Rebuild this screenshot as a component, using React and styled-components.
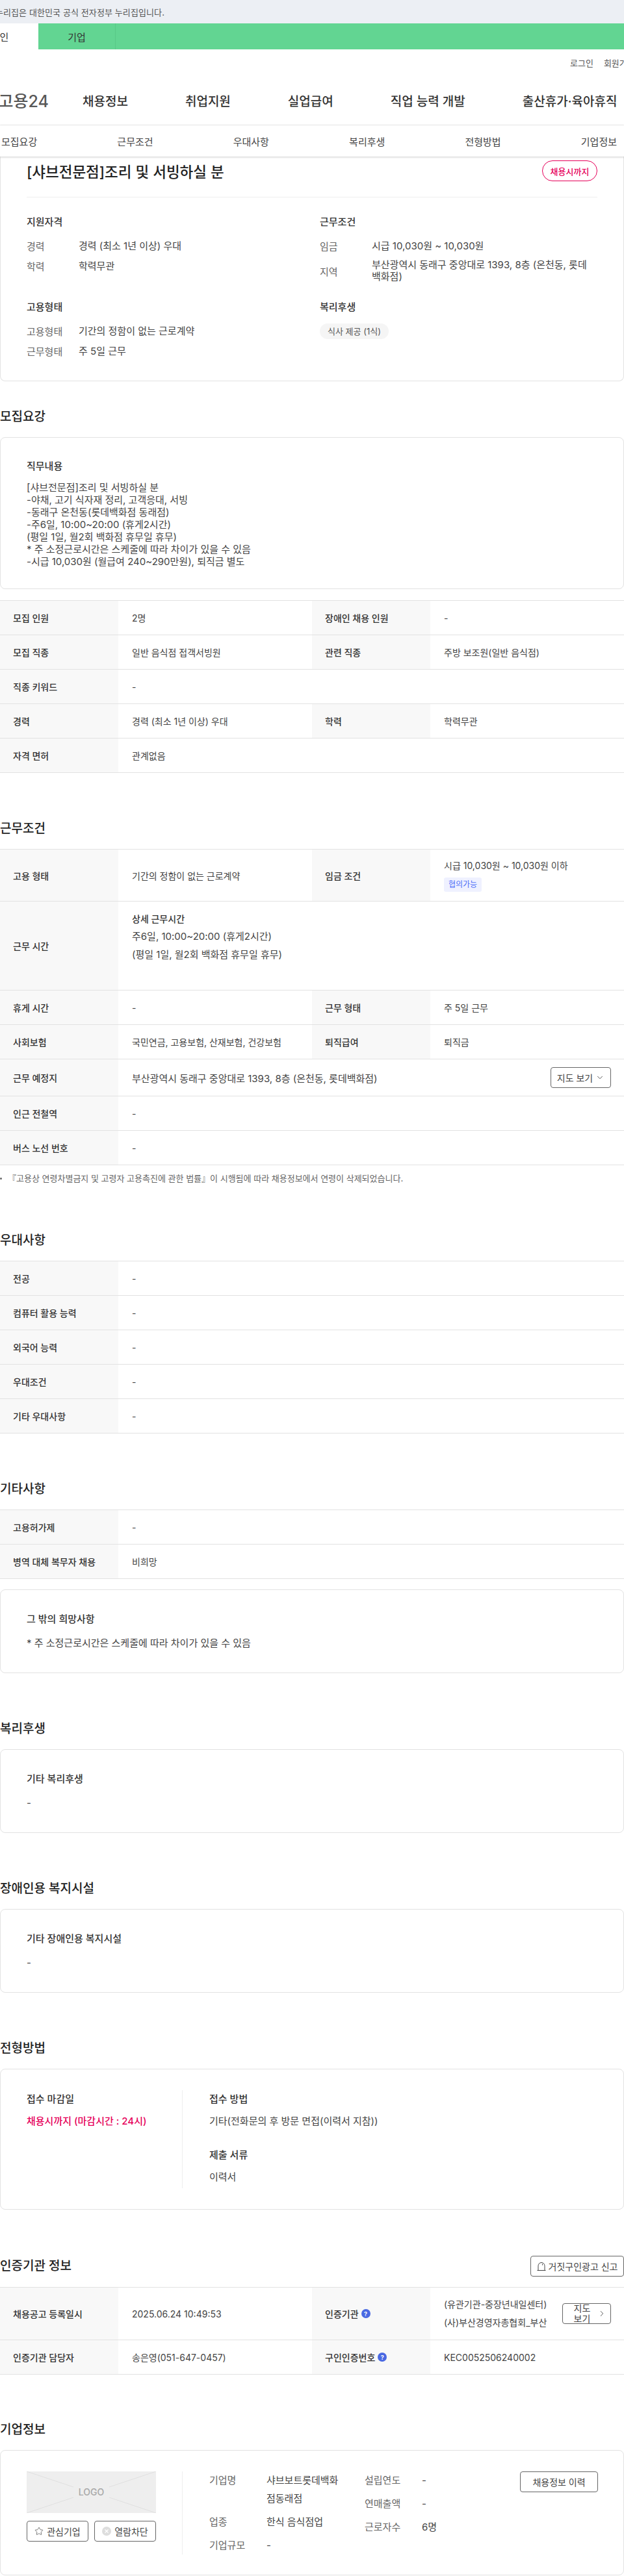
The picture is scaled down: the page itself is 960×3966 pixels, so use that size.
import React from "react";
import styled, {createGlobalStyle} from "styled-components";
import {ChevronDown, ChevronRight, Star} from "lucide-react";

const GlobalStyle = createGlobalStyle`
  * {
    box-sizing: border-box;
  }
  html,
  body {
    margin: 0;
    padding: 0;
    background: #fff;
  }
  body {
    font-family: Inter, "Noto Sans CJK KR", "Noto Sans", sans-serif;
    color: #333;
  }
`;

const recruitRows = [
  [["모집 인원", "2명"], ["장애인 채용 인원", "-"]],
  [["모집 직종", "일반 음식점 접객서빙원"], ["관련 직종", "주방 보조원(일반 음식점)"]],
  [["직종 키워드", "-"]],
  [["경력", "경력 (최소 1년 이상) 우대"], ["학력", "학력무관"]],
  [["자격 면허", "관계없음"]],
];

const preferRows = [
  ["전공", "-"],
  ["컴퓨터 활용 능력", "-"],
  ["외국어 능력", "-"],
  ["우대조건", "-"],
  ["기타 우대사항", "-"],
];

const App = () => {
  return (
    <Page>
      <GlobalStyle />
      <TopBar>
        <TopBarText>누리집은 대한민국 공식 전자정부 누리집입니다.</TopBarText>
      </TopBar>
      <TabBar>
        <Tab $active>개인</Tab>
        <Tab>기업</Tab>
      </TabBar>
      <UtilRow>
        <UtilLink>로그인</UtilLink>
        <UtilLink>회원가입</UtilLink>
      </UtilRow>
      <MainNav>
        <LogoBox>
          <Logo>고용24</Logo>
        </LogoBox>
        <NavItem>채용정보</NavItem>
        <NavItem>취업지원</NavItem>
        <NavItem>실업급여</NavItem>
        <NavItem>직업 능력 개발</NavItem>
        <NavItem>출산휴가·육아휴직</NavItem>
      </MainNav>
      <SubNav>
        <SubNavItem>모집요강</SubNavItem>
        <SubNavItem>근무조건</SubNavItem>
        <SubNavItem>우대사항</SubNavItem>
        <SubNavItem>복리후생</SubNavItem>
        <SubNavItem>전형방법</SubNavItem>
        <SubNavItem>기업정보</SubNavItem>
      </SubNav>

      <SummaryCard>
        <TitleRow>
          <JobTitle>[샤브전문점]조리 및 서빙하실 분</JobTitle>
          <DeadlineBadge>채용시까지</DeadlineBadge>
        </TitleRow>
        <Divider />
        <SummaryGrid>
          <div>
            <BlockTitle>지원자격</BlockTitle>
            <InfoRow>
              <InfoLabel>경력</InfoLabel>
              <InfoValue>경력 (최소 1년 이상) 우대</InfoValue>
            </InfoRow>
            <InfoRow>
              <InfoLabel>학력</InfoLabel>
              <InfoValue>학력무관</InfoValue>
            </InfoRow>
          </div>
          <div>
            <BlockTitle>근무조건</BlockTitle>
            <InfoRow>
              <InfoLabel>임금</InfoLabel>
              <InfoValue>시급 10,030원 ~ 10,030원</InfoValue>
            </InfoRow>
            <InfoRow>
              <InfoLabel>지역</InfoLabel>
              <InfoValue>부산광역시 동래구 중앙대로 1393, 8층 (온천동, 롯데백화점)</InfoValue>
            </InfoRow>
          </div>
          <div>
            <BlockTitle>고용형태</BlockTitle>
            <InfoRow>
              <InfoLabel>고용형태</InfoLabel>
              <InfoValue>기간의 정함이 없는 근로계약</InfoValue>
            </InfoRow>
            <InfoRow>
              <InfoLabel>근무형태</InfoLabel>
              <InfoValue>주 5일 근무</InfoValue>
            </InfoRow>
          </div>
          <div>
            <BlockTitle>복리후생</BlockTitle>
            <WelfareChip>식사 제공 (1식)</WelfareChip>
          </div>
        </SummaryGrid>
      </SummaryCard>

      <Section $top={41}>
        <SectionTitle>모집요강</SectionTitle>
        <Card $compact>
          <CardTitle $gap={11}>직무내용</CardTitle>
          <JobText>
            {`[샤브전문점]조리 및 서빙하실 분
-야채, 고기 식자재 정리, 고객응대, 서빙
-동래구 온천동(롯데백화점 동래점)
-주6일, 10:00~20:00 (휴게2시간)
(평일 1일, 월2회 백화점 휴무일 휴무)
* 주 소정근로시간은 스케줄에 따라 차이가 있을 수 있음
-시급 10,030원 (월급여 240~290만원), 퇴직금 별도`}
          </JobText>
        </Card>
        <Table $top={17}>
          {recruitRows.map((cells) => (
            <Row key={cells[0][0]}>
              {cells.map(([label, value]) => (
                <React.Fragment key={label}>
                  <Th>{label}</Th>
                  <Td $span={cells.length === 1}>{value}</Td>
                </React.Fragment>
              ))}
            </Row>
          ))}
        </Table>
      </Section>

      <Section>
        <SectionTitle>근무조건</SectionTitle>
        <Table>
          <Row $height={80}>
            <Th>고용 형태</Th>
            <Td>기간의 정함이 없는 근로계약</Td>
            <Th>임금 조건</Th>
            <Td $column>
              <WageText>시급 10,030원 ~ 10,030원 이하</WageText>
              <NegotiableTag>협의가능</NegotiableTag>
            </Td>
          </Row>
          <Row $height={137}>
            <Th>근무 시간</Th>
            <Td $span $top>
              <HoursBlock>
                <HoursTitle>상세 근무시간</HoursTitle>
                <HoursText>주6일, 10:00~20:00 (휴게2시간)</HoursText>
                <HoursText>(평일 1일, 월2회 백화점 휴무일 휴무)</HoursText>
              </HoursBlock>
            </Td>
          </Row>
          <Row>
            <Th>휴게 시간</Th>
            <Td>-</Td>
            <Th>근무 형태</Th>
            <Td>주 5일 근무</Td>
          </Row>
          <Row>
            <Th>사회보험</Th>
            <Td>국민연금, 고용보험, 산재보험, 건강보험</Td>
            <Th>퇴직급여</Th>
            <Td>퇴직금</Td>
          </Row>
          <Row $height={57}>
            <Th>근무 예정지</Th>
            <Td $span $between>
              <AddressText>부산광역시 동래구 중앙대로 1393, 8층 (온천동, 롯데백화점)</AddressText>
              <OutlineButton $width={93}>
                지도 보기 <ChevronDown size={14} strokeWidth={1.5} />
              </OutlineButton>
            </Td>
          </Row>
          <Row>
            <Th>인근 전철역</Th>
            <Td $span>-</Td>
          </Row>
          <Row>
            <Th>버스 노선 번호</Th>
            <Td $span>-</Td>
          </Row>
        </Table>
        <Note>『고용상 연령차별금지 및 고령자 고용촉진에 관한 법률』이 시행됨에 따라 채용정보에서 연령이 삭제되었습니다.</Note>
      </Section>

      <Section>
        <SectionTitle>우대사항</SectionTitle>
        <Table>
          {preferRows.map(([label, value]) => (
            <Row key={label}>
              <Th>{label}</Th>
              <Td $span>{value}</Td>
            </Row>
          ))}
        </Table>
      </Section>

      <Section>
        <SectionTitle>기타사항</SectionTitle>
        <Table>
          <Row>
            <Th>고용허가제</Th>
            <Td $span>-</Td>
          </Row>
          <Row>
            <Th>병역 대체 복무자 채용</Th>
            <Td $span>비희망</Td>
          </Row>
        </Table>
        <Card $top={16}>
          <CardTitle>그 밖의 희망사항</CardTitle>
          <CardText>* 주 소정근로시간은 스케줄에 따라 차이가 있을 수 있음</CardText>
        </Card>
      </Section>

      <Section>
        <SectionTitle>복리후생</SectionTitle>
        <Card>
          <CardTitle>기타 복리후생</CardTitle>
          <CardText>-</CardText>
        </Card>
      </Section>

      <Section>
        <SectionTitle>장애인용 복지시설</SectionTitle>
        <Card>
          <CardTitle>기타 장애인용 복지시설</CardTitle>
          <CardText>-</CardText>
        </Card>
      </Section>

      <Section>
        <SectionTitle>전형방법</SectionTitle>
        <ApplyCard>
          <ApplyLeft>
            <ApplyTitle>접수 마감일</ApplyTitle>
            <DeadlineText>채용시까지 (마감시간 : 24시)</DeadlineText>
          </ApplyLeft>
          <ApplyRight>
            <ApplyTitle>접수 방법</ApplyTitle>
            <ApplyText>기타(전화문의 후 방문 면접(이력서 지참))</ApplyText>
            <ApplyTitle $next>제출 서류</ApplyTitle>
            <ApplyText>이력서</ApplyText>
          </ApplyRight>
        </ApplyCard>
      </Section>

      <Section $top={71}>
        <TitleLine>
          <SectionTitle $flat>인증기관 정보</SectionTitle>
          <OutlineButton $width={144}>
            <svg width="14" height="15" viewBox="0 0 14 15" fill="none" stroke="#444" strokeWidth="1">
              <path d="M0.5 13.5h13M2 13.5V6.5a5 5 0 0 1 10 0v7" />
              <path d="M8.5 3.5v2" />
            </svg>
            거짓구인광고 신고
          </OutlineButton>
        </TitleLine>
        <Table>
          <Row $height={81}>
            <Th>채용공고 등록일시</Th>
            <Td>2025.06.24 10:49:53</Td>
            <Th>
              인증기관<HelpDot>?</HelpDot>
            </Th>
            <Td $between>
              <AgencyText>
                (유관기관-중장년내일센터)
                <br />
                (사)부산경영자총협회_부산
              </AgencyText>
              <MapButton>
                <span>지도 보기</span>
                <ChevronRight size={14} strokeWidth={1.5} />
              </MapButton>
            </Td>
          </Row>
          <Row>
            <Th>인증기관 담당자</Th>
            <Td>송은영(051-647-0457)</Td>
            <Th>
              구인인증번호<HelpDot>?</HelpDot>
            </Th>
            <Td>KEC0052506240002</Td>
          </Row>
        </Table>
      </Section>

      <Section $top={71}>
        <SectionTitle>기업정보</SectionTitle>
        <CompanyCard>
          <CompanyLeft>
            <LogoHolder>
              <svg width="199" height="64" viewBox="0 0 199 64">
                <rect width="199" height="64" fill="#eeeeee" />
                <path d="M0 0L72 24M199 0L127 24M0 64L72 40M199 64L127 40" stroke="#e0e0e0" fill="none" />
                <text x="99.5" y="37" textAnchor="middle" fontSize="14" fontWeight="500" fill="#a8a8a8">
                  LOGO
                </text>
              </svg>
            </LogoHolder>
            <CompanyButtons>
              <SmallButton>
                <Star size={14} strokeWidth={1.2} />
                관심기업
              </SmallButton>
              <SmallButton>
                <svg width="14" height="14" viewBox="0 0 14 14">
                  <circle cx="7" cy="7" r="7" fill="#dddddd" />
                  <path d="M4.5 4.5l5 5M9.5 4.5l-5 5" stroke="#fff" strokeWidth="1.2" />
                </svg>
                열람차단
              </SmallButton>
            </CompanyButtons>
          </CompanyLeft>
          <CompanyInfo>
            <CompanyList>
              <CompanyRow>
                <CompanyLabel>기업명</CompanyLabel>
                <CompanyValue>샤브보트롯데백화점동래점</CompanyValue>
              </CompanyRow>
              <CompanyRow>
                <CompanyLabel>업종</CompanyLabel>
                <CompanyValue>한식 음식점업</CompanyValue>
              </CompanyRow>
              <CompanyRow>
                <CompanyLabel>기업규모</CompanyLabel>
                <CompanyValue>-</CompanyValue>
              </CompanyRow>
            </CompanyList>
            <CompanyList>
              <CompanyRow>
                <CompanyLabel>설립연도</CompanyLabel>
                <CompanyValue>-</CompanyValue>
              </CompanyRow>
              <CompanyRow>
                <CompanyLabel>연매출액</CompanyLabel>
                <CompanyValue>-</CompanyValue>
              </CompanyRow>
              <CompanyRow>
                <CompanyLabel>근로자수</CompanyLabel>
                <CompanyValue>6명</CompanyValue>
              </CompanyRow>
            </CompanyList>
            <OutlineButton $width={120}>채용정보 이력</OutlineButton>
          </CompanyInfo>
        </CompanyCard>
      </Section>
    </Page>
  );
};

export default App;

const Page = styled.div`
  width: 960px;
  height: 3966px;
  overflow: hidden;
`;

const TopBar = styled.div`
  height: 36px;
  display: flex;
  align-items: center;
  background: #eceff4;
`;

const TopBarText = styled.div`
  width: 253px;
  display: flex;
  justify-content: flex-end;
  white-space: nowrap;
  font-size: 13px;
  letter-spacing: 0.1px;
  color: #555;
`;

const TabBar = styled.div`
  height: 40px;
  display: flex;
  background: #62d592;
`;

const Tab = styled.div`
  width: 119px;
  display: grid;
  place-items: center;
  font-size: 15px;
  color: #333;
  margin-left: ${(props) => (props.$active ? "-60px" : "0")};
  background: ${(props) => (props.$active ? "#fff" : "transparent")};
  border-right: ${(props) => (props.$active ? "none" : "1px solid #58c886")};
`;

const UtilRow = styled.div`
  height: 40px;
  display: flex;
  gap: 16px;
  align-items: center;
  padding-left: 877px;
`;

const UtilLink = styled.span`
  font-size: 13px;
  color: #555;
  white-space: nowrap;
`;

const MainNav = styled.div`
  height: 77px;
  display: flex;
  align-items: center;
  gap: 88px;
  border-bottom: 1px solid #eee;
`;

const LogoBox = styled.div`
  width: 75px;
  margin-right: -36px;
  display: flex;
  justify-content: flex-end;
`;

const Logo = styled.div`
  font-size: 25px;
  font-weight: 500;
  color: #585858;
  white-space: nowrap;
`;

const NavItem = styled.div`
  font-size: 19px;
  font-weight: 500;
  color: #333;
  white-space: nowrap;
`;

const SubNav = styled.div`
  position: relative;
  z-index: 2;
  height: 48px;
  display: flex;
  justify-content: space-between;
  align-items: center;
  padding: 0 11px 0 2px;
  background: #fff;
  box-shadow: 0 1px 3px rgba(0, 0, 0, 0.2);
`;

const SubNavItem = styled.div`
  font-size: 15px;
  color: #444;
`;

const SummaryCard = styled.div`
  height: 346px;
  padding: 6px 40px 0;
  border: 1px solid #e2e2e2;
  border-top: none;
  border-radius: 0 0 8px 8px;
`;

const TitleRow = styled.div`
  height: 32px;
  display: flex;
  justify-content: space-between;
  align-items: center;
`;

const JobTitle = styled.h1`
  margin: 0;
  font-size: 22.5px;
  font-weight: 500;
  color: #222;
`;

const DeadlineBadge = styled.div`
  width: 85px;
  height: 32px;
  display: grid;
  place-items: center;
  border: 1px solid #e6005a;
  border-radius: 16px;
  font-size: 13px;
  font-weight: 500;
  color: #e6005a;
`;

const Divider = styled.div`
  margin-top: 24px;
  border-bottom: 1px solid #eee;
`;

const SummaryGrid = styled.div`
  margin-top: 26px;
  display: grid;
  grid-template-columns: 451px 1fr;
  row-gap: 26px;
`;

const BlockTitle = styled.div`
  font-size: 15px;
  line-height: 24px;
  font-weight: 500;
  color: #333;
  margin-bottom: 14px;
`;

const InfoRow = styled.div`
  display: flex;
  align-items: center;
  min-height: 21px;
  margin-bottom: 10px;
  &:last-child {
    margin-bottom: 0;
  }
`;

const InfoLabel = styled.div`
  flex: 0 0 80px;
  font-size: 15px;
  color: #666;
`;

const InfoValue = styled.div`
  flex: 1;
  padding-right: 8px;
  font-size: 15px;
  line-height: 18px;
  color: #444;
`;

const WelfareChip = styled.div`
  display: inline-block;
  margin-top: -3px;
  height: 24px;
  padding: 0 12px;
  line-height: 24px;
  font-size: 13px;
  color: #555;
  background: #f5f5f5;
  border-radius: 12px;
`;

const Section = styled.section`
  margin-top: ${(props) => props.$top ?? 72}px;
`;

const SectionTitle = styled.h2`
  margin: 0 0 ${(props) => (props.$flat ? 0 : 17)}px;
  font-size: 19px;
  line-height: 28px;
  font-weight: 500;
  color: #222;
`;

const TitleLine = styled.div`
  display: flex;
  justify-content: space-between;
  align-items: center;
  margin-bottom: 16px;
`;

const Card = styled.div`
  margin-top: ${(props) => props.$top ?? 0}px;
  padding: ${(props) => (props.$compact ? "32px 40px" : "33px 40px 35px")};
  border: 1px solid #e2e2e2;
  border-radius: 8px;
`;

const CardTitle = styled.div`
  font-size: 15px;
  line-height: 24px;
  font-weight: 500;
  color: #333;
  margin-bottom: ${(props) => props.$gap ?? 14}px;
`;

const CardText = styled.div`
  font-size: 15px;
  line-height: 21px;
  color: #444;
`;

const JobText = styled.div`
  font-size: 15px;
  line-height: 19px;
  color: #444;
  white-space: pre-line;
`;

const Table = styled.div`
  margin-top: ${(props) => props.$top ?? 0}px;
  border-top: 1px solid #e2e2e2;
`;

const Row = styled.div`
  display: grid;
  grid-template-columns: 182px 298px 182px 1fr;
  min-height: ${(props) => props.$height ?? 53}px;
  border-bottom: 1px solid #e2e2e2;
`;

const Th = styled.div`
  display: flex;
  align-items: center;
  gap: 4px;
  padding: 0 8px 0 20px;
  background: #f8f8f8;
  font-size: 14px;
  font-weight: 500;
  color: #333;
`;

const Td = styled.div`
  display: flex;
  flex-direction: ${(props) => (props.$column ? "column" : "row")};
  align-items: ${(props) => (props.$column || props.$top ? "flex-start" : "center")};
  justify-content: ${(props) => (props.$between ? "space-between" : props.$column ? "center" : "flex-start")};
  padding: 0 20px 0 21px;
  font-size: 14px;
  color: #444;
  grid-column: ${(props) => (props.$span ? "2 / -1" : "auto")};
`;

const WageText = styled.div`
  font-size: 14px;
  line-height: 21px;
`;

const NegotiableTag = styled.span`
  margin-top: 8px;
  height: 22px;
  padding: 0 7px;
  line-height: 22px;
  font-size: 12px;
  color: #4a6cf7;
  background: #eff1ff;
  border-radius: 3px;
`;

const HoursBlock = styled.div`
  padding-top: 13px;
`;

const HoursTitle = styled.div`
  font-size: 14px;
  line-height: 27px;
  font-weight: 500;
  color: #333;
`;

const HoursText = styled.div`
  font-size: 15px;
  line-height: 27.5px;
`;

const AddressText = styled.span`
  font-size: 15px;
`;

const OutlineButton = styled.button`
  flex: none;
  width: ${(props) => props.$width}px;
  height: 32px;
  display: inline-flex;
  justify-content: center;
  align-items: center;
  gap: 4px;
  padding: 0;
  background: #fff;
  border: 1px solid #666;
  border-radius: 4px;
  font-family: inherit;
  font-size: 14px;
  color: #444;
`;

const HelpDot = styled.span`
  width: 14px;
  height: 14px;
  display: grid;
  place-items: center;
  border-radius: 50%;
  background: #4a69e2;
  color: #fff;
  font-size: 9px;
  font-weight: 700;
`;

const AgencyText = styled.div`
  font-size: 14px;
  line-height: 28px;
  white-space: nowrap;
`;

const MapButton = styled.button`
  flex: none;
  width: 75px;
  height: 32px;
  display: flex;
  align-items: center;
  justify-content: center;
  gap: 8px;
  padding: 0 6px 0 14px;
  background: #fff;
  border: 1px solid #666;
  border-radius: 4px;
  font-family: inherit;
  font-size: 14px;
  line-height: 16px;
  color: #444;
  & > span {
    width: 30px;
  }
`;

const Note = styled.div`
  margin-top: 10px;
  display: flex;
  align-items: center;
  gap: 9px;
  font-size: 13px;
  line-height: 20px;
  color: #666;
  white-space: nowrap;
  &::before {
    content: "";
    width: 3px;
    height: 3px;
    border-radius: 50%;
    background: #666;
  }
`;

const ApplyCard = styled.div`
  display: grid;
  grid-template-columns: 280px 1fr;
  padding: 32px 0;
  border: 1px solid #e2e2e2;
  border-radius: 8px;
`;

const ApplyLeft = styled.div`
  padding: 2px 0 0 40px;
  border-right: 1px solid #eee;
`;

const ApplyRight = styled.div`
  padding: 2px 40px 7px 41px;
`;

const ApplyTitle = styled.div`
  font-size: 15px;
  line-height: 24px;
  font-weight: 500;
  color: #333;
  margin: ${(props) => (props.$next ? "30px" : "0")} 0 11px;
`;

const ApplyText = styled.div`
  font-size: 15px;
  line-height: 21px;
  color: #444;
`;

const DeadlineText = styled(ApplyText)`
  font-weight: 500;
  color: #e6005a;
`;

const CompanyCard = styled.div`
  display: grid;
  grid-template-columns: 280px 1fr;
  height: 193px;
  padding: 32px 0;
  border: 1px solid #e2e2e2;
  border-radius: 8px;
`;

const CompanyLeft = styled.div`
  padding-left: 40px;
  padding-right: 40px;
  border-right: 1px solid #eee;
`;

const LogoHolder = styled.div`
  height: 64px;
  & > svg {
    display: block;
  }
`;

const CompanyButtons = styled.div`
  margin-top: 12px;
  display: flex;
  justify-content: space-between;
`;

const SmallButton = styled.button`
  width: 95px;
  height: 32px;
  display: flex;
  justify-content: center;
  align-items: center;
  gap: 5px;
  padding: 0;
  background: #fff;
  border: 1px solid #666;
  border-radius: 4px;
  font-family: inherit;
  font-size: 14px;
  color: #444;
`;

const CompanyInfo = styled.div`
  display: flex;
  align-items: flex-start;
  gap: 39px;
  padding-left: 41px;
  & > button {
    margin-left: auto;
    margin-right: 40px;
  }
`;

const CompanyList = styled.div`
  display: flex;
  flex-direction: column;
  gap: 8px;
`;

const CompanyRow = styled.div`
  display: flex;
  align-items: flex-start;
  font-size: 15px;
  line-height: 28px;
`;

const CompanyLabel = styled.div`
  flex: 0 0 88px;
  color: #666;
`;

const CompanyValue = styled.div`
  width: 112px;
  color: #444;
  word-break: break-all;
`;
